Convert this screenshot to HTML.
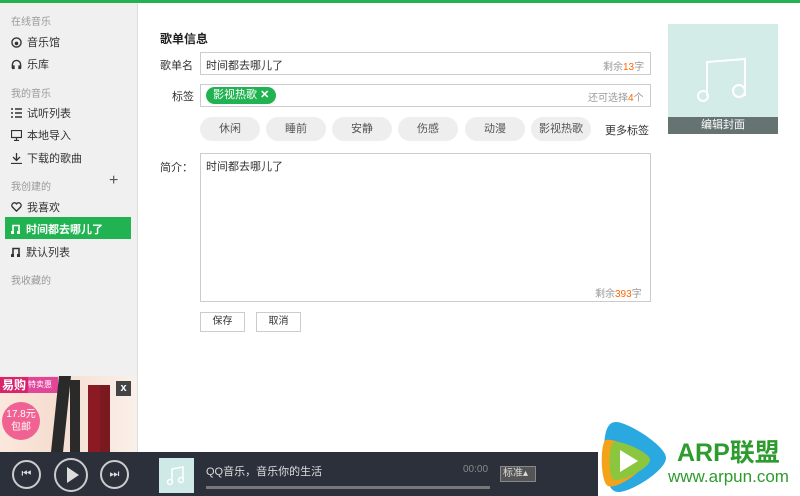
<!DOCTYPE html><html><head><meta charset="utf-8"><style>
*{margin:0;padding:0;box-sizing:border-box}
body{width:800px;height:496px;position:relative;overflow:hidden;background:#fff;font-family:"Liberation Sans","Noto Sans CJK SC",sans-serif;font-size:11px;color:#333}
.a{position:absolute}
.side{left:0;top:3px;width:138px;height:449px;background:#f0f0f0;border-right:1px solid #ddd}
.h{color:#999;font-size:10px;left:11px}
.it{left:11px;font-size:11px;color:#333;display:flex;align-items:center;gap:5px}
.inp{border:1px solid #ccc;background:#fff}
.pill{top:117px;height:24px;background:#eee;border-radius:12px;width:60px;text-align:center;line-height:24px;color:#555;font-size:11px}
.lbl{font-size:11px;color:#333}
</style></head><body>
<div class="a" style="left:0;top:0;width:800px;height:3px;background:#21b352"></div>
<div class="a side"></div>
<div class="a h" style="top:13px">在线音乐</div>
<div class="a it" style="top:34px"><svg width="11" height="11" viewBox="0 0 12 12"><circle cx="6" cy="6" r="5" fill="none" stroke="#333" stroke-width="1.5"/><circle cx="6" cy="7" r="2" fill="#333"/></svg>音乐馆</div>
<div class="a it" style="top:56px"><svg width="11" height="11" viewBox="0 0 12 12"><path d="M1.5 10V6a4.5 4.5 0 0 1 9 0v4" fill="none" stroke="#333" stroke-width="1.5"/><rect x="1" y="7" width="3" height="4" fill="#333"/><rect x="8" y="7" width="3" height="4" fill="#333"/></svg>乐库</div>
<div class="a h" style="top:85px">我的音乐</div>
<div class="a it" style="top:105px"><svg width="11" height="10"><path d="M0 1h2M4 1h7M0 5h2M4 5h7M0 9h2M4 9h7" stroke="#333" stroke-width="1.5"/></svg>试听列表</div>
<div class="a it" style="top:127px"><svg width="11" height="11"><rect x="0.5" y="0.5" width="10" height="7" fill="none" stroke="#333" stroke-width="1.2"/><path d="M3 10.5h5M5.5 8v2" stroke="#333" stroke-width="1.2"/></svg>本地导入</div>
<div class="a it" style="top:150px"><svg width="11" height="11"><path d="M5.5 0v7M2 4l3.5 3.5L9 4M0 10.5h11" fill="none" stroke="#333" stroke-width="1.3"/></svg>下载的歌曲</div>
<div class="a h" style="top:178px">我创建的</div>
<div class="a" style="left:109px;top:172px;font-size:16px;color:#555">+</div>
<div class="a it" style="top:199px"><svg width="11" height="10" viewBox="0 0 12 11"><path d="M6 10L1.5 5.5A2.7 2.7 0 0 1 6 2a2.7 2.7 0 0 1 4.5 3.5z" fill="none" stroke="#333" stroke-width="1.5"/></svg>我喜欢</div>
<div class="a" style="left:5px;top:217px;width:126px;height:22px;background:#21b352"></div>
<div class="a it" style="top:221px;color:#fff;font-weight:bold"><svg width="10" height="10"><path d="M2 9V1.5h6V9" fill="none" stroke="#fff" stroke-width="1.6"/><rect x="0" y="7" width="3" height="3" fill="#fff"/><rect x="6" y="7" width="3" height="3" fill="#fff"/></svg>时间都去哪儿了</div>
<div class="a it" style="top:244px"><svg width="10" height="10"><path d="M2 9V1.5h6V9" fill="none" stroke="#333" stroke-width="1.6"/><rect x="0" y="7" width="3" height="3" fill="#333"/><rect x="6" y="7" width="3" height="3" fill="#333"/></svg>默认列表</div>
<div class="a h" style="top:272px">我收藏的</div>
<!-- ad -->
<div class="a" style="left:0;top:376px;width:137px;height:76px;background:linear-gradient(90deg,#fbe8dc,#f5ddd0 40%,#faf0ea)"></div>
<div class="a" style="left:0;top:377px;width:46px;height:16px;background:#d8246c;color:#fff;font-weight:bold;font-size:12px;line-height:16px;padding-left:2px">易购</div>
<div class="a" style="left:28px;top:377px;width:30px;height:16px;background:#e0479a;color:#fff;font-size:8px;line-height:16px;white-space:nowrap;overflow:hidden">特卖惠</div>
<div class="a" style="left:2px;top:402px;width:38px;height:38px;border-radius:50%;background:#f06292;color:#fff;font-size:10px;text-align:center;line-height:13px;padding-top:6px">17.8元<br>包邮</div>
<div class="a" style="left:55px;top:376px;width:12px;height:76px;background:#2a2a2a;transform:skewX(-6deg)"></div>
<div class="a" style="left:70px;top:380px;width:10px;height:72px;background:#2a2a2a"></div>
<div class="a" style="left:88px;top:385px;width:12px;height:67px;background:#8b1a22"></div>
<div class="a" style="left:100px;top:385px;width:10px;height:67px;background:#7a1a20"></div>
<div class="a" style="left:116px;top:381px;width:15px;height:15px;background:#444;color:#fff;font-weight:bold;text-align:center;line-height:15px">x</div>
<!-- main -->
<div class="a" style="left:160px;top:30px;font-weight:bold;font-size:12px;color:#222">歌单信息</div>
<div class="a lbl" style="left:160px;top:57px">歌单名</div>
<div class="a inp" style="left:200px;top:52px;width:451px;height:23px"></div>
<div class="a" style="left:206px;top:57px">时间都去哪儿了</div>
<div class="a" style="left:603px;top:58px;color:#999;font-size:10px">剩余<span style="color:#f60">13</span>字</div>
<div class="a lbl" style="left:172px;top:88px">标签</div>
<div class="a inp" style="left:200px;top:84px;width:451px;height:23px"></div>
<div class="a" style="left:206px;top:87px;width:70px;height:17px;border-radius:9px;background:#21b352;color:#fff;font-size:11px;line-height:17px;padding-left:7px">影视热歌 <b>✕</b></div>
<div class="a" style="left:588px;top:89px;color:#999;font-size:10px">还可选择<span style="color:#f60">4</span>个</div>
<div class="a pill" style="left:200px">休闲</div>
<div class="a pill" style="left:266px">睡前</div>
<div class="a pill" style="left:332px">安静</div>
<div class="a pill" style="left:398px">伤感</div>
<div class="a pill" style="left:465px">动漫</div>
<div class="a pill" style="left:531px">影视热歌</div>
<div class="a" style="left:605px;top:122px;color:#333">更多标签</div>
<div class="a lbl" style="left:160px;top:159px">简介：</div>
<div class="a inp" style="left:200px;top:153px;width:451px;height:149px"></div>
<div class="a" style="left:206px;top:158px">时间都去哪儿了</div>
<div class="a" style="left:595px;top:285px;color:#999;font-size:10px">剩余<span style="color:#f60">393</span>字</div>
<div class="a" style="left:200px;top:312px;width:45px;height:20px;border:1px solid #ccc;text-align:center;line-height:18px;font-size:10px">保存</div>
<div class="a" style="left:256px;top:312px;width:45px;height:20px;border:1px solid #ccc;text-align:center;line-height:18px;font-size:10px">取消</div>
<!-- cover -->
<div class="a" style="left:668px;top:24px;width:110px;height:110px;background:#d3ece8"></div>
<svg class="a" style="left:690px;top:50px" width="60" height="60"><path d="M17 46V12l38-3v37" fill="none" stroke="#fff" stroke-width="2"/><circle cx="13" cy="46" r="5" fill="none" stroke="#fff" stroke-width="2"/><circle cx="49" cy="41" r="6" fill="none" stroke="#fff" stroke-width="2"/></svg>
<div class="a" style="left:668px;top:117px;width:110px;height:17px;background:#657371;color:#fff;text-align:center;line-height:17px;font-size:11px">编辑封面</div>
<!-- player -->
<div class="a" style="left:0;top:452px;width:800px;height:44px;background:#2b303b"></div>
<div class="a" style="left:12px;top:460px;width:29px;height:29px;border:2px solid #ccc;border-radius:50%;color:#ddd;text-align:center;line-height:25px;font-size:11px">⏮</div>
<div class="a" style="left:54px;top:458px;width:34px;height:34px;border:2px solid #ccc;border-radius:50%"></div>
<svg class="a" style="left:66px;top:466px" width="14" height="18"><path d="M1 1l12 8-12 8z" fill="#ddd"/></svg>
<div class="a" style="left:100px;top:460px;width:29px;height:29px;border:2px solid #ccc;border-radius:50%;color:#ddd;text-align:center;line-height:25px;font-size:11px">⏭</div>
<div class="a" style="left:159px;top:458px;width:35px;height:35px;background:#cfe9e6"></div>
<svg class="a" style="left:166px;top:464px" width="20" height="22"><path d="M6 18V5l11-2v13" fill="none" stroke="#fff" stroke-width="1.5"/><circle cx="4" cy="18" r="2.5" fill="none" stroke="#fff" stroke-width="1.5"/><circle cx="15" cy="16" r="2.5" fill="none" stroke="#fff" stroke-width="1.5"/></svg>
<div class="a" style="left:206px;top:463px;color:#ddd;font-size:11px">QQ音乐，音乐你的生活</div>
<div class="a" style="left:463px;top:464px;color:#888;font-size:10px">00:00</div>
<div class="a" style="left:206px;top:486px;width:284px;height:3px;background:#777"></div>
<div class="a" style="left:500px;top:466px;width:36px;height:16px;background:#555;border:1px solid #888;color:#ddd;font-size:10px;line-height:14px;padding-left:2px">标准▴</div>
<!-- logo -->
<div class="a" style="left:598px;top:435px;width:202px;height:61px;background:#fff"></div>
<svg class="a" style="left:598px;top:412px" width="85" height="84"><path d="M18 10C10 10 6 18 6 40s4 40 14 40c14 0 48-22 48-34S30 10 18 10z" fill="#2aa9e0"/><path d="M8 28C2 30 2 70 10 74c8 4 38-16 38-26S14 26 8 28z" fill="#f5a21b"/><path d="M16 30c-6 2-6 36 0 38 8 2 36-12 36-20S22 28 16 30z" fill="#8cc63e"/><path d="M22 38v22l18-11z" fill="#fff"/></svg>
<div class="a" style="left:677px;top:440px;color:#2d9b2d;font-weight:bold;font-size:25px;line-height:26px">ARP联盟</div>
<div class="a" style="left:668px;top:467px;color:#2d9b2d;font-size:17px">www.arpun.com</div>
</body></html>
